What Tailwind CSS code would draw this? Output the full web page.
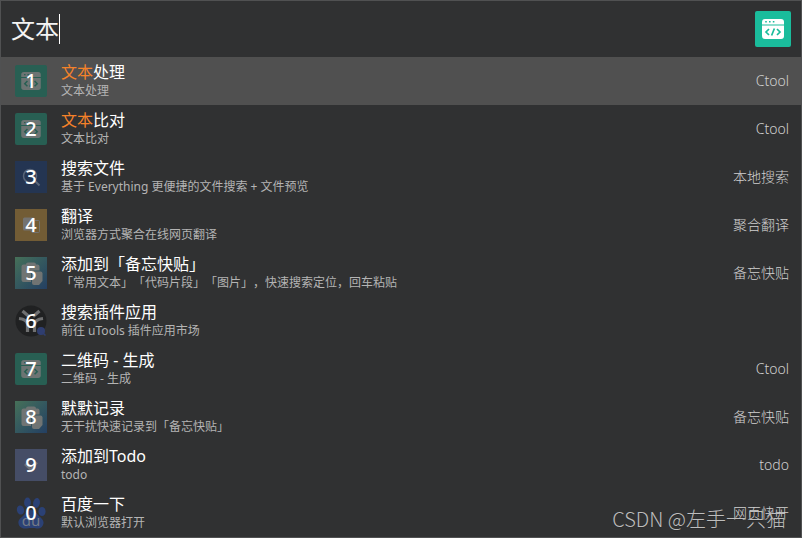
<!DOCTYPE html>
<html lang="zh-CN">
<head>
    <meta charset="UTF-8">
    <meta name="viewport" content="width=device-width, initial-scale=1.0">
    <title>uTools</title>
    <script src="https://cdn.jsdelivr.net/npm/@tailwindcss/browser@4"></script>
</head>
<body class="min-h-screen bg-[#303132] font-['Noto_Sans','Noto_Sans_CJK_SC',sans-serif] [text-spacing-trim:space-all]">
    <!-- icon sprites -->
    <svg class="hidden">
        <symbol id="ctool" viewBox="0 0 36 36">
            <path fill="currentColor" fill-rule="evenodd" d="M10 8h16a3 3 0 0 1 3 3v2.5H7V11a3 3 0 0 1 3-3zm.2 2v1.6h1.6V10zm3.8 0v1.6h1.6V10zm3.8 0v1.6h1.6V10z"/>
            <path fill="currentColor" d="M7 14.5h22V25a3 3 0 0 1-3 3H10a3 3 0 0 1-3-3z"/>
            <path fill="none" class="stroke-(--tile)" stroke-width="1.7" d="M14 18l-3 3 3 3M22 18l3 3-3 3M19.400 17.500l-2.800 7"/>
        </symbol>
        <symbol id="memo" viewBox="0 0 32 32">
            <path fill="currentColor" d="M8.500 7.500H11a2 2 0 0 1 2-2h6a2 2 0 0 1 2 2h1.500a2 2 0 0 1 2 2v4H19a3 3 0 0 0-3 3V25H8.500a2 2 0 0 1-2-2V9.500a2 2 0 0 1 2-2z"/>
            <path fill="currentColor" d="M19 14.500h6.500a2 2 0 0 1 2 2V24l-3.500 4h-5a2 2 0 0 1-2-2v-9.500a2 2 0 0 1 2-2z"/>
        </symbol>
    </svg>

    <main class="flex min-h-screen flex-col border border-[#505152]">
        <header class="flex h-14 items-center justify-between px-[10px]">
            <div class="flex items-center">
                <label for="search" class="sr-only">搜索</label>
                <input id="search" type="text" value="文本" class="field-sizing-content h-10 text-[24px] leading-10 text-[#f4f4f4] outline-none">
                <span class="h-[30px] w-px bg-white"></span>
            </div>
            <button type="button" aria-label="Ctool" class="size-9 rounded-xs bg-[#1abc9c] text-white [--tile:#1abc9c]">
                <svg class="size-9"><use href="#ctool"/></svg>
            </button>
        </header>

        <ul class="text-white">
            <li>
                <a href="#" class="flex h-12 items-center bg-[#505050] pr-3 pl-[14px]">
                    <span class="grid size-8 place-items-center rounded-xs bg-[#285f53] text-[#6c7473] [--tile:#285f53]">
                        <svg class="col-start-1 row-start-1 size-8"><use href="#ctool"/></svg>
                        <span class="col-start-1 row-start-1 text-[20px] leading-8 font-medium text-white">1</span>
                    </span>
                    <span class="ml-[14px] flex flex-1 flex-col">
                        <span class="text-[16px] leading-[20px]"><em class="text-[#f5822a] not-italic">文本</em>处理</span>
                        <span class="text-[12px] leading-[18px] text-[#b4b4b4]">文本处理</span>
                    </span>
                    <span class="pb-0.5 text-[14px] font-light text-[#d0d0d0]">Ctool</span>
                </a>
            </li>
            <li>
                <a href="#" class="flex h-12 items-center pr-3 pl-[14px]">
                    <span class="grid size-8 place-items-center rounded-xs bg-[#285f53] text-[#6c7473] [--tile:#285f53]">
                        <svg class="col-start-1 row-start-1 size-8"><use href="#ctool"/></svg>
                        <span class="col-start-1 row-start-1 text-[20px] leading-8 font-medium text-white">2</span>
                    </span>
                    <span class="ml-[14px] flex flex-1 flex-col">
                        <span class="text-[16px] leading-[20px]"><em class="text-[#f5822a] not-italic">文本</em>比对</span>
                        <span class="text-[12px] leading-[18px] text-[#b4b4b4]">文本比对</span>
                    </span>
                    <span class="pb-0.5 text-[14px] font-light text-[#d0d0d0]">Ctool</span>
                </a>
            </li>
            <li>
                <a href="#" class="flex h-12 items-center pr-3 pl-[14px]">
                    <span class="grid size-8 place-items-center bg-[#243552] text-[#596579]">
                        <svg class="col-start-1 row-start-1 size-8" viewBox="0 0 32 32" fill="none" stroke="currentColor">
                            <circle cx="15" cy="15" r="6.500" stroke-width="1.500"/>
                            <path stroke-width="2" d="M19.500 19.500l5 5"/>
                        </svg>
                        <span class="col-start-1 row-start-1 text-[20px] leading-8 font-medium text-white">3</span>
                    </span>
                    <span class="ml-[14px] flex flex-1 flex-col">
                        <span class="text-[16px] leading-[20px]">搜索文件</span>
                        <span class="text-[12px] leading-[18px] text-[#b4b4b4]">基于 Everything 更便捷的文件搜索 + 文件预览</span>
                    </span>
                    <span class="pb-0.5 text-[14px] font-light text-[#d0d0d0]">本地搜索</span>
                </a>
            </li>
            <li>
                <a href="#" class="flex h-12 items-center pr-3 pl-[14px]">
                    <span class="grid size-8 place-items-center bg-[#725c35] text-[#747371]">
                        <svg class="col-start-1 row-start-1 size-8" viewBox="0 0 32 32">
                            <rect x="8" y="8.500" width="12" height="13" rx="1.500" fill="currentColor"/>
                            <path fill="none" stroke="currentColor" d="M20 11.500h3.500a1 1 0 0 1 1 1v10a1 1 0 0 1-1 1H17l-1.500-2"/>
                        </svg>
                        <span class="col-start-1 row-start-1 text-[20px] leading-8 font-medium text-white">4</span>
                    </span>
                    <span class="ml-[14px] flex flex-1 flex-col">
                        <span class="text-[16px] leading-[20px]">翻译</span>
                        <span class="text-[12px] leading-[18px] text-[#b4b4b4]">浏览器方式聚合在线网页翻译</span>
                    </span>
                    <span class="pb-0.5 text-[14px] font-light text-[#d0d0d0]">聚合翻译</span>
                </a>
            </li>
            <li>
                <a href="#" class="flex h-12 items-center pr-3 pl-[14px]">
                    <span class="grid size-8 place-items-center bg-linear-to-br from-[#467058] to-[#243f62] text-[#707473]">
                        <svg class="col-start-1 row-start-1 size-8"><use href="#memo"/></svg>
                        <span class="col-start-1 row-start-1 text-[20px] leading-8 font-medium text-white">5</span>
                    </span>
                    <span class="ml-[14px] flex flex-1 flex-col">
                        <span class="text-[16px] leading-[20px]">添加到「备忘快贴」</span>
                        <span class="text-[12px] leading-[18px] text-[#b4b4b4]">「常用文本」「代码片段」「图片」，快速搜索定位，回车粘贴</span>
                    </span>
                    <span class="pb-0.5 text-[14px] font-light text-[#d0d0d0]">备忘快贴</span>
                </a>
            </li>
            <li>
                <a href="#" class="flex h-12 items-center pr-3 pl-[14px]">
                    <span class="grid size-8 place-items-center text-[#6f7071]">
                        <svg class="col-start-1 row-start-1 size-8" viewBox="0 0 32 32">
                            <circle cx="16" cy="16" r="15.500" fill="#202122"/>
                            <g fill="none" stroke="currentColor" stroke-width="3.200">
                                <path d="M7.500 6l6.500 5.500M24.500 6L18 11.500"/>
                                <path d="M4 13.500c4 .500 8 2 8.500 5.500v8M28 13.500c-4 .500-8 2-8.500 5.500v8"/>
                            </g>
                            <circle cx="26" cy="26" r="4" fill="#2f3e70"/>
                            <path stroke="#2f3e70" stroke-width="1.500" d="M28 28l2.500 2.500"/>
                        </svg>
                        <span class="col-start-1 row-start-1 text-[20px] leading-8 font-medium text-white">6</span>
                    </span>
                    <span class="ml-[14px] flex flex-1 flex-col">
                        <span class="text-[16px] leading-[20px]">搜索插件应用</span>
                        <span class="text-[12px] leading-[18px] text-[#b4b4b4]">前往 uTools 插件应用市场</span>
                    </span>
                </a>
            </li>
            <li>
                <a href="#" class="flex h-12 items-center pr-3 pl-[14px]">
                    <span class="grid size-8 place-items-center rounded-xs bg-[#285f53] text-[#6c7473] [--tile:#285f53]">
                        <svg class="col-start-1 row-start-1 size-8"><use href="#ctool"/></svg>
                        <span class="col-start-1 row-start-1 text-[20px] leading-8 font-medium text-white">7</span>
                    </span>
                    <span class="ml-[14px] flex flex-1 flex-col">
                        <span class="text-[16px] leading-[20px]">二维码 - 生成</span>
                        <span class="text-[12px] leading-[18px] text-[#b4b4b4]">二维码 - 生成</span>
                    </span>
                    <span class="pb-0.5 text-[14px] font-light text-[#d0d0d0]">Ctool</span>
                </a>
            </li>
            <li>
                <a href="#" class="flex h-12 items-center pr-3 pl-[14px]">
                    <span class="grid size-8 place-items-center bg-linear-to-br from-[#467058] to-[#243f62] text-[#707473]">
                        <svg class="col-start-1 row-start-1 size-8"><use href="#memo"/></svg>
                        <span class="col-start-1 row-start-1 text-[20px] leading-8 font-medium text-white">8</span>
                    </span>
                    <span class="ml-[14px] flex flex-1 flex-col">
                        <span class="text-[16px] leading-[20px]">默默记录</span>
                        <span class="text-[12px] leading-[18px] text-[#b4b4b4]">无干扰快速记录到「备忘快贴」</span>
                    </span>
                    <span class="pb-0.5 text-[14px] font-light text-[#d0d0d0]">备忘快贴</span>
                </a>
            </li>
            <li>
                <a href="#" class="flex h-12 items-center pr-3 pl-[14px]">
                    <span class="grid size-8 place-items-center bg-[#454d66] text-[#6c7078]">
                        <svg class="col-start-1 row-start-1 size-8" viewBox="0 0 32 32">
                            <path fill="none" stroke="currentColor" stroke-width="2.500" d="M10 15l5.500 5.500 6.500-7"/>
                        </svg>
                        <span class="col-start-1 row-start-1 text-[20px] leading-8 font-medium text-white">9</span>
                    </span>
                    <span class="ml-[14px] flex flex-1 flex-col">
                        <span class="text-[16px] leading-[20px]">添加到Todo</span>
                        <span class="text-[12px] leading-[18px] text-[#b4b4b4]">todo</span>
                    </span>
                    <span class="pb-0.5 text-[14px] font-light text-[#d0d0d0]">todo</span>
                </a>
            </li>
            <li>
                <a href="#" class="flex h-12 items-center pr-3 pl-[14px]">
                    <span class="grid size-8 place-items-center text-[#2b4175]">
                        <svg class="col-start-1 row-start-1 size-8" viewBox="0 0 32 32" fill="currentColor">
                            <ellipse cx="5.500" cy="13" rx="3.600" ry="4.600" transform="rotate(-12 5.500 13)"/>
                            <ellipse cx="12.500" cy="5.500" rx="3.400" ry="5"/>
                            <ellipse cx="21.500" cy="6" rx="3.400" ry="5" transform="rotate(12 21.500 6)"/>
                            <ellipse cx="27" cy="14.500" rx="3.600" ry="4.600"/>
                            <path d="M16 13c4 0 5 3 7.500 5.500S29 23 28.500 26.500 25 32 21.500 31.500 18 31 16 31s-3 .500-6 .500S4 30 3.500 26.500 5 21.500 8 19s4-6 8-6z"/>
                            <text x="16" y="29" text-anchor="middle" font-size="15" fill="#747a86">du</text>
                        </svg>
                        <span class="col-start-1 row-start-1 text-[20px] leading-8 font-medium text-white">0</span>
                    </span>
                    <span class="ml-[14px] flex flex-1 flex-col">
                        <span class="text-[16px] leading-[20px]">百度一下</span>
                        <span class="text-[12px] leading-[18px] text-[#b4b4b4]">默认浏览器打开</span>
                    </span>
                    <span class="pb-0.5 text-[14px] font-light text-[#d0d0d0]">网页快开</span>
                </a>
            </li>
        </ul>
    </main>

    <!-- watermark -->
    <p class="absolute right-4 bottom-1 font-['Liberation_Sans_Narrow','Noto_Sans_CJK_SC',sans-serif] text-[20px] leading-[30px] font-light text-[#bdbdbd] text-shadow-2xs">CSDN @左手一只猫</p>
</body>
</html>
